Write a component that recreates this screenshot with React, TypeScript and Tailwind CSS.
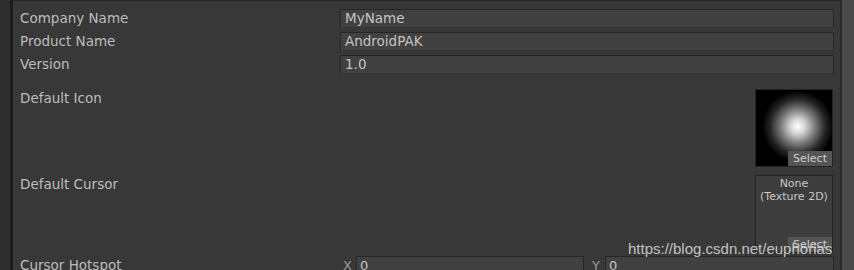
import React from 'react';

const LABEL = 'text-[13.5px] text-[#bdbdbd] leading-[19px]';

function TextRow({ label, value }: { label: string; value: string }) {
  return (
    <div className="flex h-[19px] items-center">
      <div className={`w-[320px] ${LABEL}`}>{label}</div>
      <div className="h-[19px] flex-1 border border-[#262626] border-b-[#353535] bg-[#414141] pl-[4px] text-[13.5px] leading-[17px] text-[#c4c4c4]">
        {value}
      </div>
    </div>
  );
}

export default function App() {
  return (
    <div
      className="flex h-[270px] w-[854px] overflow-hidden bg-[#383838]"
      style={{ fontFamily: '"DejaVu Sans", sans-serif' }}
    >
      <div className="w-[10px] bg-[#2e2e2e]" />
      <div className="w-[3px] bg-[#1c1c1c]" />
      <div className="relative flex flex-1 flex-col">
        <div className="h-[6px] border-b border-[#262626] bg-[#424242]" />
        <div className="flex flex-col gap-[4px] pl-[7px] pr-[6px] pt-[8px]">
          <TextRow label="Company Name" value="MyName" />
          <TextRow label="Product Name" value="AndroidPAK" />
          <TextRow label="Version" value="1.0" />
        </div>
        <div className="mt-[15px] flex pl-[7px] pr-[7px]">
          <div className={`flex-1 ${LABEL}`}>Default Icon</div>
          <div className="relative h-[78px] w-[78px] border border-[#242424] bg-black">
            <div
              className="absolute inset-0"
              style={{ background: 'radial-gradient(circle at 55% 48%, #ffffff 0%, #d8d8d8 12%, #7a7a7a 30%, #262626 48%, #000 62%)' }}
            />
            <div className="absolute bottom-0 right-0 h-[15px] w-[44px] bg-[#555555] text-center text-[11px] leading-[15px] text-[#d0d0d0]">
              Select
            </div>
          </div>
        </div>
        <div className="mt-[8px] flex pl-[7px] pr-[7px]">
          <div className={`flex-1 ${LABEL}`}>Default Cursor</div>
          <div className="relative h-[78px] w-[78px] border border-[#242424] bg-[#3d3d3d] pt-[1px] text-center text-[11px] leading-[13px] text-[#c8c8c8]">
            <div>None</div>
            <div>(Texture 2D)</div>
            <div className="absolute bottom-0 right-0 h-[15px] w-[44px] bg-[#555555] text-center text-[11px] leading-[15px] text-[#d0d0d0]">
              Select
            </div>
          </div>
        </div>
        <div className="mt-[3px] flex h-[19px] items-center pl-[7px] pr-[6px]">
          <div className={`w-[320px] ${LABEL}`}>Cursor Hotspot</div>
          <div className="w-[16px] pl-[3px] text-[13px] text-[#9a9a9a]">X</div>
          <div className="h-[19px] w-[228px] border border-[#262626] bg-[#414141] pl-[3px] text-[13px] leading-[17px] text-[#c4c4c4]">0</div>
          <div className="w-[21px] pl-[8px] text-[13px] text-[#9a9a9a]">Y</div>
          <div className="h-[19px] flex-1 border border-[#262626] bg-[#414141] pl-[3px] text-[13px] leading-[17px] text-[#c4c4c4]">0</div>
        </div>
        <div
          className="absolute left-[615px] top-[238px] text-[15px] text-[#e6e6e6]/80"
          style={{ fontFamily: '"Liberation Sans", Arial, sans-serif' }}
        >
          https://blog.csdn.net/euphorias
        </div>
      </div>
      <div className="w-[2px] bg-[#2a2a2a]" />
      <div className="w-[12px] bg-[#4a4a4a]" />
    </div>
  );
}
